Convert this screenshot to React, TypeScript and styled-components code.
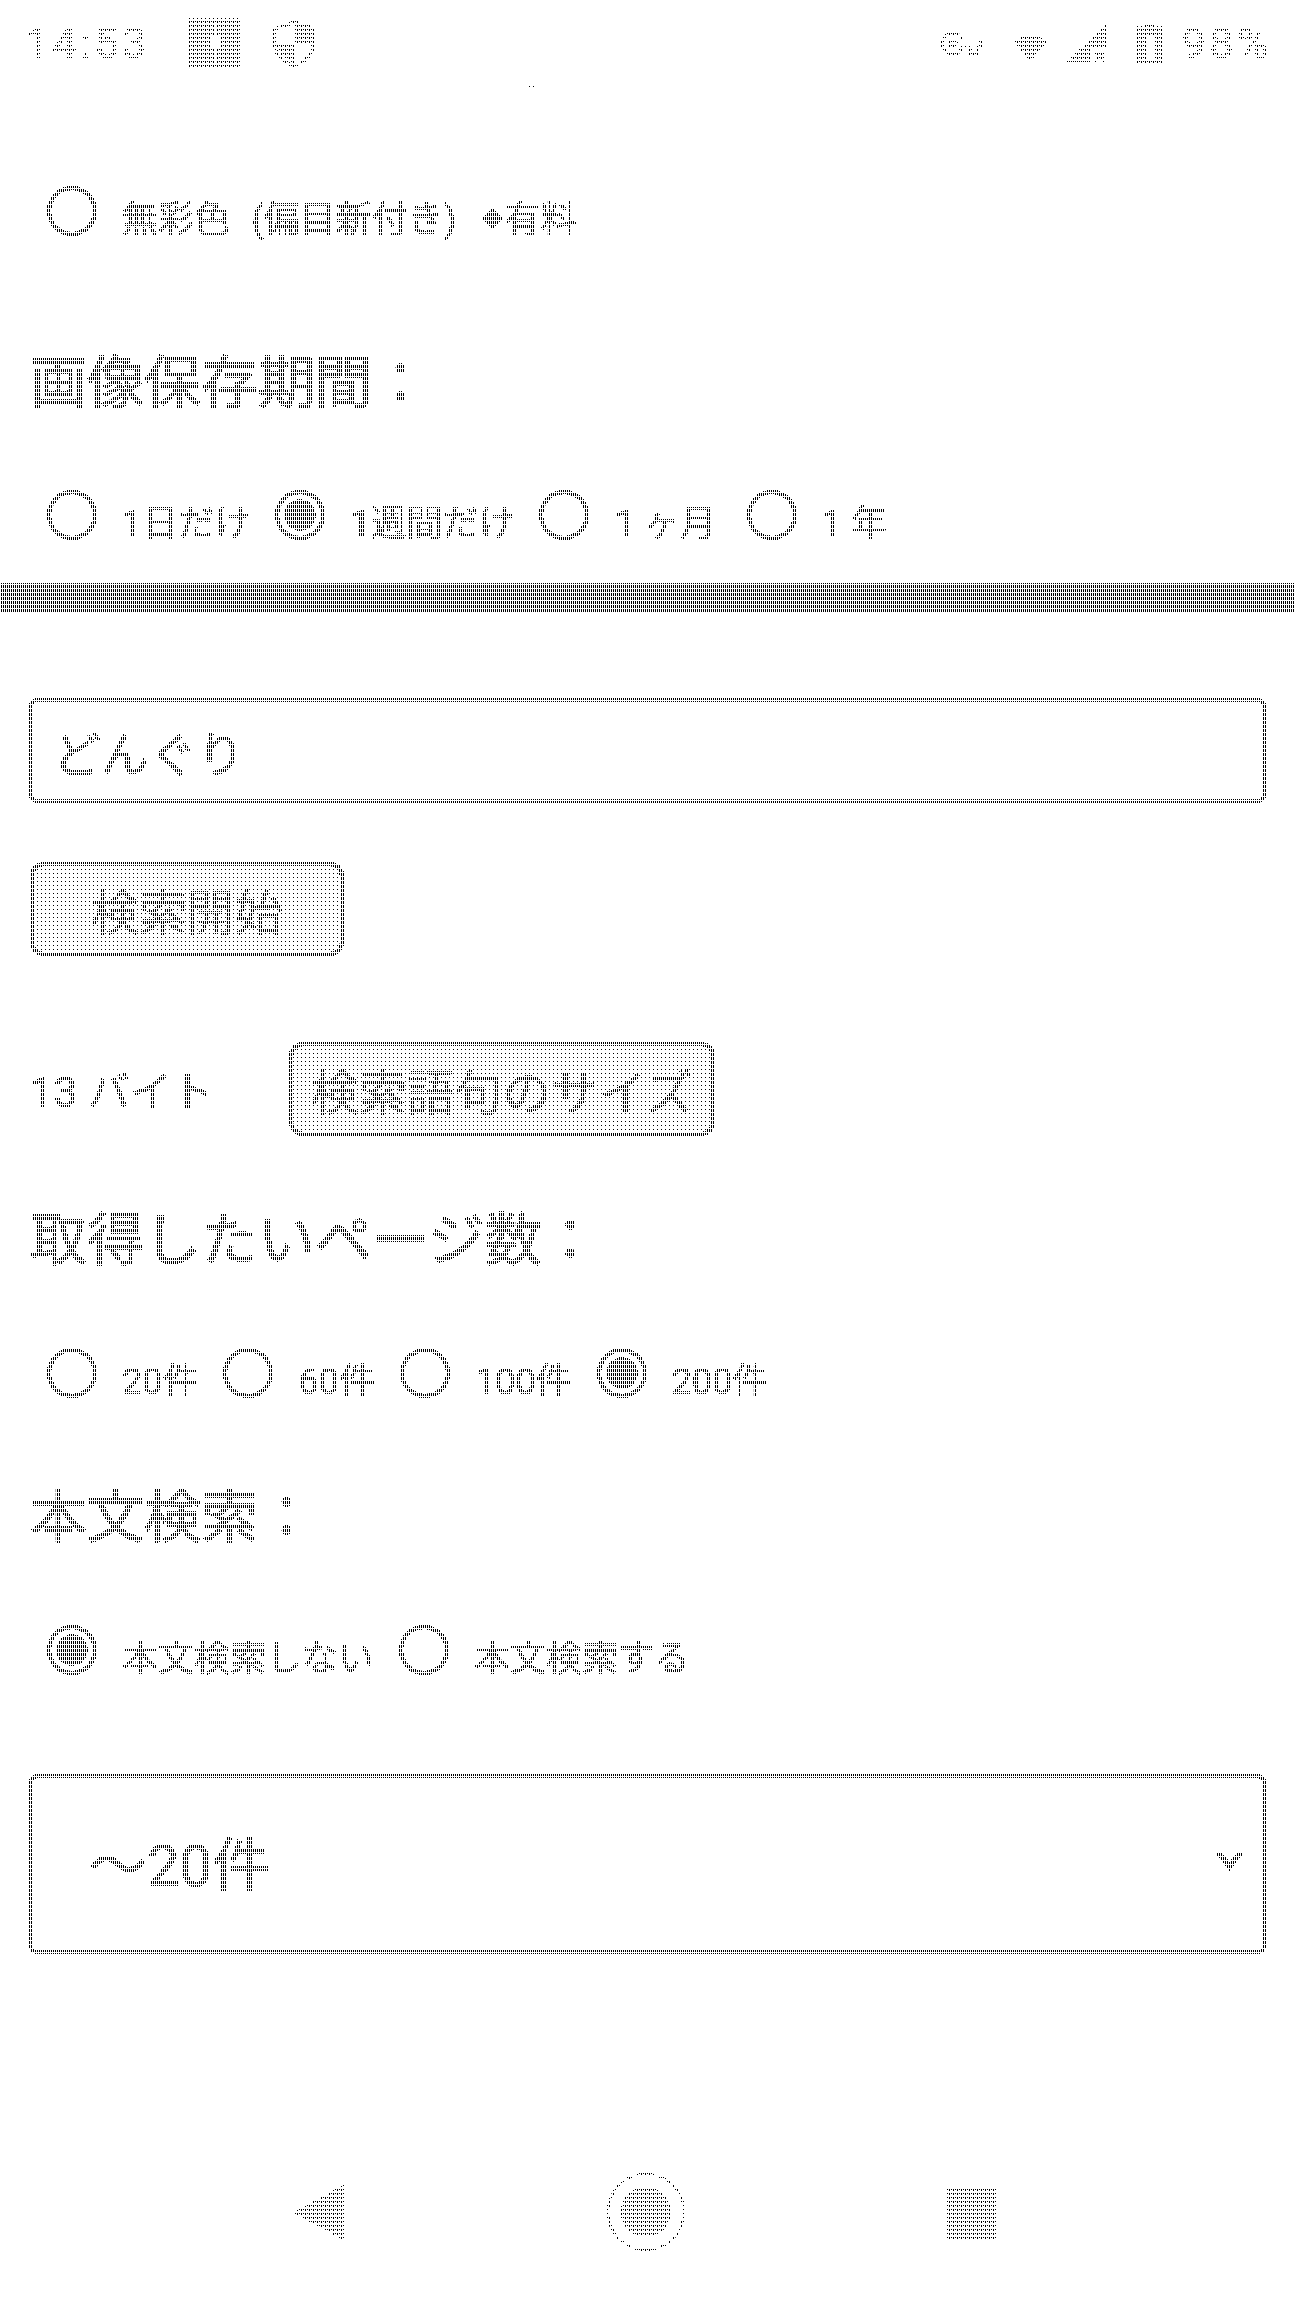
import React from "react";
import styled, { createGlobalStyle } from "styled-components";

const Global = createGlobalStyle`
  html, body { margin: 0; padding: 0; background: #fff; }
  * { box-sizing: border-box; }
`;

const FONT = `Roboto, "Noto Sans CJK JP", sans-serif`;

const Page = styled.div`
  position: relative;
  width: 1294px;
  height: 2300px;
  overflow: hidden;
  display: flex;
  flex-direction: column;
  background: #fff;
  color: #000;
  font-family: ${FONT};
  filter: grayscale(1) brightness(0.7) contrast(40);
`;

/* the 1-bit halftone raster that lies over the whole screen */
const DenseRaster = styled.div`
  position: absolute;
  inset: 0;
  pointer-events: none;
  background-image:
    linear-gradient(to right, #fff 1px, transparent 1px),
    linear-gradient(to bottom, #fff 1px, transparent 1px);
  background-size: 2px 2px, 4px 4px;
`;

const SparseRaster = styled.div<{ $top: number; $height: number }>`
  position: absolute;
  left: 0;
  right: 0;
  top: ${(p) => p.$top}px;
  height: ${(p) => p.$height}px;
  pointer-events: none;
  background-image:
    conic-gradient(from 90deg at 2px 2px, #fff 25%, transparent 0),
    linear-gradient(to right, #fff 1px, transparent 1px),
    linear-gradient(to bottom, #fff 1px, transparent 1px, transparent 3px, #fff 3px);
  background-size: 4px 4px, 2px 2px, 4px 4px;
`;

const StatusBar = styled.header`
  position: relative;
  flex: none;
  height: 86px;
  display: flex;
  align-items: center;
  padding: 0 22px 0 25px;
`;

const StatusText = styled.span<{ $ml?: number }>`
  font-family: Roboto, sans-serif;
  font-size: 43px;
  line-height: 50px;
  letter-spacing: 3.5px;
  margin-left: ${(p) => p.$ml ?? 0}px;
  -webkit-text-stroke: 0.6px #000;
`;

const StatusRight = styled.div`
  margin-left: auto;
  display: flex;
  align-items: center;
`;

const StatusIcon = styled.svg<{ $ml: number }>`
  display: block;
  flex: none;
  margin-left: ${(p) => p.$ml}px;
`;

const TinyMark = styled.i`
  position: absolute;
  left: 529px;
  top: 86px;
  width: 5px;
  height: 1px;
  border-left: 1px solid #000;
  border-right: 1px solid #000;
`;

const RadioRow = styled.div<{ $mt: number }>`
  flex: none;
  display: flex;
  align-items: flex-end;
  height: 51px;
  margin-top: ${(p) => p.$mt}px;
  padding-left: 47px;
`;

const RadioCircle = styled.span<{ $on?: boolean }>`
  flex: none;
  width: 50px;
  height: 50px;
  border-radius: 50%;
  border: 4px solid #000;
  background: ${(p) =>
    p.$on ? "radial-gradient(circle, #000 0 15.5px, transparent 16px)" : "transparent"};
`;

const RadioLabel = styled.span<{ $extra?: number }>`
  flex: none;
  margin: 0 ${(p) => 25 + (p.$extra ?? 0)}px -3px 25px;
  font-size: 36px;
  line-height: 37px;
  white-space: pre;
  -webkit-text-stroke: 0.5px #000;
`;

const SmallMark = styled.span`
  display: inline-block;
  margin: 0 2px 0 26px;
  font-size: 20px;
  vertical-align: 6px;
`;

const Heading = styled.h2<{ $mt: number }>`
  flex: none;
  margin: ${(p) => p.$mt}px 0 0;
  padding-left: 30px;
  height: 70px;
  font-size: 57px;
  font-weight: 400;
  line-height: 70px;
  -webkit-text-stroke: 1px #000;
`;

const Divider = styled.hr`
  flex: none;
  margin: 43px 0 0;
  height: 29px;
  border: 0;
  background: #000;
`;

const TextField = styled.input`
  flex: none;
  display: block;
  width: 1237px;
  height: 105px;
  margin: 86px 0 0 29px;
  padding: 0 0 0 20px;
  border: 4px solid #000;
  border-radius: 8px;
  background: #fff;
  color: #000;
  font-family: ${FONT};
  font-size: 48px;
  outline: none;
  -webkit-text-stroke: 0.5px #000;
`;

const DotButton = styled.button<{ $dotX: number; $dotY: number }>`
  flex: none;
  height: 94px;
  padding: 0;
  border: 4px solid #000;
  border-radius: 14px;
  color: #000;
  font-family: ${FONT};
  font-size: 48px;
  -webkit-text-stroke: 0.4px #000;
  background-color: #fff;
  background-origin: border-box;
  background-image:
    linear-gradient(to bottom, #fff 1px, transparent 1px, transparent 2px, #fff 2px),
    linear-gradient(to right, transparent 1px, #000 1px, #000 2px, transparent 2px);
  background-size: 4px 4px;
  background-position: ${(p) => `${p.$dotX}px ${p.$dotY}px`};
`;

const StartButton = styled(DotButton)`
  width: 314px;
  margin: 59px 0 0 30px;
`;

const SizeRow = styled.div`
  flex: none;
  display: flex;
  align-items: center;
  margin-top: 86px;
  padding-left: 30px;
`;

const SizeLabel = styled.span`
  flex: none;
  width: 259px;
  font-size: 42px;
  line-height: 50px;
  white-space: pre;
  position: relative;
  top: 4px;
  -webkit-text-stroke: 0.5px #000;
`;

const SizeButton = styled(DotButton)`
  width: 426px;
`;

const SelectBox = styled.div`
  flex: none;
  width: 1237px;
  height: 180px;
  margin: 99px 0 0 29px;
  padding: 0 18px 6px 56px;
  border: 4px solid #000;
  border-radius: 8px;
  display: flex;
  align-items: center;
  justify-content: space-between;
  font-size: 58px;
  -webkit-text-stroke: 0.5px #000;
`;

const NavBar = styled.nav`
  flex: none;
  margin-top: 218px;
  height: 80px;
  padding-right: 4px;
  display: flex;
  align-items: center;
  justify-content: center;
`;

const BackIcon = styled.svg`
  display: block;
  margin-right: 263px;
`;

const HomeRing = styled.span`
  flex: none;
  width: 78px;
  height: 78px;
  border-radius: 50%;
  border: 2px solid #000;
  display: flex;
  align-items: center;
  justify-content: center;
`;

const HomeDot = styled.span`
  width: 50px;
  height: 50px;
  border-radius: 50%;
  background: #000;
`;

const RecentSquare = styled.span`
  flex: none;
  width: 51px;
  height: 50px;
  margin: 3px 0 0 261px;
  background: #000;
`;

const Radio = ({ on, extra, children }: { on?: boolean; extra?: number; children: React.ReactNode }) => (
  <>
    <RadioCircle $on={on} />
    <RadioLabel $extra={extra}>{children}</RadioLabel>
  </>
);

export default function App() {
  return (
    <Page>
      <Global />
      <StatusBar>
        <StatusText>14:53</StatusText>
        <StatusIcon $ml={38} width="53" height="51" viewBox="0 0 53 51">
          <path
            fillRule="evenodd"
            d="M0 0H53V51H0ZM26 5V17H22V29H26V46H29V29H33V17H29V5Z"
          />
        </StatusIcon>
        <StatusIcon $ml={32} width="42" height="47" viewBox="0 0 42 47">
          <path d="M21 2 40 9V25C40 36 31 42 21 46 11 42 2 36 2 25V9Z" fill="none" stroke="#000" strokeWidth="3" />
          <path d="M22 4H38V24H22ZM4 24H21V43C12 39 5 33 4 24Z" />
        </StatusIcon>
        <TinyMark />
        <StatusRight>
          <StatusIcon $ml={0} width="43" height="23" viewBox="0.5 5.5 23 13">
            <path
              d="M12.65 10C11.83 7.67 9.61 6 7 6c-3.31 0-6 2.69-6 6s2.69 6 6 6c2.61 0 4.83-1.67 5.65-4H17v4h4v-4h2v-4H12.65zM7 14c-1.1 0-2-.9-2-2s.9-2 2-2 2 .9 2 2-.9 2-2 2z"
              fill="none"
              stroke="#000"
              strokeWidth="1.5"
            />
          </StatusIcon>
          <StatusIcon $ml={31} width="33" height="38" viewBox="0 0 33 38">
            <path d="M0 17Q16 7 33 17L16.5 38Z" />
          </StatusIcon>
          <StatusIcon $ml={19} width="41" height="38" viewBox="0 0 41 38">
            <path d="M0 38 41 0V23H24V38Z" />
            <path d="M29 27 39 37M39 27 29 37" stroke="#000" strokeWidth="3" />
          </StatusIcon>
          <StatusIcon $ml={30} width="25" height="41" viewBox="0 0 25 41">
            <path
              fillRule="evenodd"
              d="M7 0H18V3H25V41H0V3H7ZM10 12V36H17V12Z"
            />
          </StatusIcon>
          <StatusText $ml={20}>98%</StatusText>
        </StatusRight>
      </StatusBar>

      <RadioRow $mt={99}>
        <Radio>
          {"無彩色\u00a0\u00a0\u200a(偏目新付き)"}
          <SmallMark>◆</SmallMark>
          有料
        </Radio>
      </RadioRow>

      <Heading $mt={113}>画像保存期間：</Heading>
      <RadioRow $mt={70}>
        <Radio>1日だけ</Radio>
        <Radio on>1週間だけ</Radio>
        <Radio extra={6}>1 ヶ月</Radio>
        <Radio>1 年</Radio>
      </RadioRow>

      <Divider />
      <TextField readOnly value="どんぐり" />
      <StartButton $dotX={2} $dotY={2}>検索開始</StartButton>

      <SizeRow>
        <SizeLabel>13 バイト</SizeLabel>
        <SizeButton $dotX={3} $dotY={2}>検索語句のサイズ</SizeButton>
      </SizeRow>

      <Heading $mt={70}>取得したいページ数：</Heading>
      <RadioRow $mt={71}>
        <Radio>20件</Radio>
        <Radio>60件</Radio>
        <Radio>100件</Radio>
        <Radio on>200件</Radio>
      </RadioRow>

      <Heading $mt={85}>本文検索：</Heading>
      <RadioRow $mt={71}>
        <Radio on>本文検索しない</Radio>
        <Radio>本文検索する</Radio>
      </RadioRow>

      <SelectBox>
        <span>～20件</span>
        <svg width="29" height="19" viewBox="0 0 29 19">
          <path d="M0 0H6L14.5 10 23 0H29L14.5 19Z" />
        </svg>
      </SelectBox>

      <NavBar>
        <BackIcon width="51" height="55" viewBox="0 0 51 55">
          <path d="M51 0V55L0 27.5Z" />
        </BackIcon>
        <HomeRing>
          <HomeDot />
        </HomeRing>
        <RecentSquare />
      </NavBar>

      <DenseRaster aria-hidden />
      <SparseRaster aria-hidden $top={0} $height={84} />
      <SparseRaster aria-hidden $top={2160} $height={140} />
    </Page>
  );
}
